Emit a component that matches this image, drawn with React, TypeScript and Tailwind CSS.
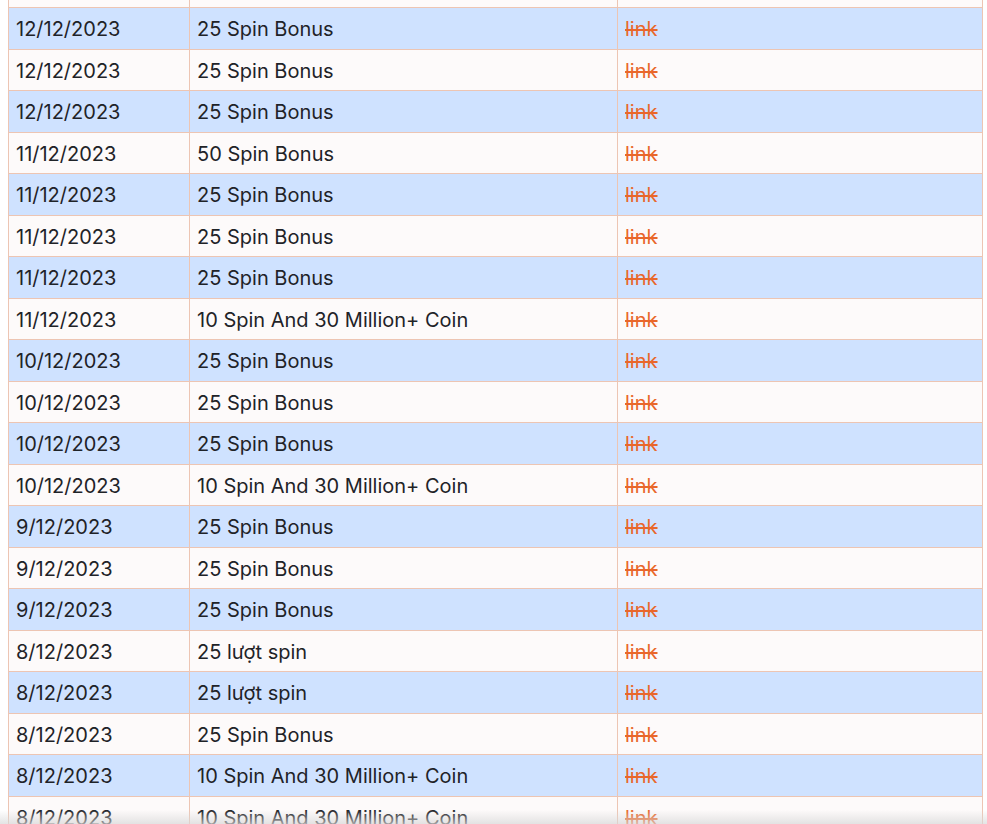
import React from 'react'

type Row = { date: string; reward: string }

const ROWS: Row[] = [
  { date: '12/12/2023', reward: '25 Spin Bonus' },
  { date: '12/12/2023', reward: '25 Spin Bonus' },
  { date: '12/12/2023', reward: '25 Spin Bonus' },
  { date: '11/12/2023', reward: '50 Spin Bonus' },
  { date: '11/12/2023', reward: '25 Spin Bonus' },
  { date: '11/12/2023', reward: '25 Spin Bonus' },
  { date: '11/12/2023', reward: '25 Spin Bonus' },
  { date: '11/12/2023', reward: '10 Spin And 30 Million+ Coin' },
  { date: '10/12/2023', reward: '25 Spin Bonus' },
  { date: '10/12/2023', reward: '25 Spin Bonus' },
  { date: '10/12/2023', reward: '25 Spin Bonus' },
  { date: '10/12/2023', reward: '10 Spin And 30 Million+ Coin' },
  { date: '9/12/2023', reward: '25 Spin Bonus' },
  { date: '9/12/2023', reward: '25 Spin Bonus' },
  { date: '9/12/2023', reward: '25 Spin Bonus' },
  { date: '8/12/2023', reward: '25 lượt spin' },
  { date: '8/12/2023', reward: '25 lượt spin' },
  { date: '8/12/2023', reward: '25 Spin Bonus' },
  { date: '8/12/2023', reward: '10 Spin And 30 Million+ Coin' },
  { date: '8/12/2023', reward: '10 Spin And 30 Million+ Coin' },
]

const border = 'border-[#edc5b3]'

export default function App() {
  return (
    <div
      className="relative h-screen overflow-hidden bg-white px-2 text-[#1f2328]"
      style={{ fontFamily: 'Inter, "Noto Sans", sans-serif' }}
    >
      <div className={`w-[975px] border-x ${border}`}>
        {/* row scrolled mostly out of view */}
        <div className={`grid h-[8px] grid-cols-[180px_428px_1fr] border-b ${border} bg-[#fdfafa]`}>
          <div />
          <div className={`border-l ${border}`} />
          <div className={`border-l ${border}`} />
        </div>
        {ROWS.map((r, i) => (
          <div
            key={i}
            className={`grid h-[41.5px] grid-cols-[180px_428px_1fr] border-b ${border} text-[20px] ${
              i % 2 === 0 ? 'bg-[#cfe2ff]' : 'bg-[#fdfafa]'
            }`}
          >
            <div className="flex items-center px-[7px] pt-[2px]">{r.date}</div>
            <div className={`flex items-center border-l ${border} px-[7px] pt-[2px]`}>{r.reward}</div>
            <div className={`flex items-center border-l ${border} px-[7px] pt-[2px]`}>
              <a href="#" className="text-[#e9672b] line-through">link</a>
            </div>
          </div>
        ))}
      </div>
      {/* bottom fade shadow */}
      <div className="pointer-events-none absolute inset-x-0 bottom-0 h-[14px] bg-gradient-to-b from-transparent to-[#d8d8d8]/70" />
    </div>
  )
}
